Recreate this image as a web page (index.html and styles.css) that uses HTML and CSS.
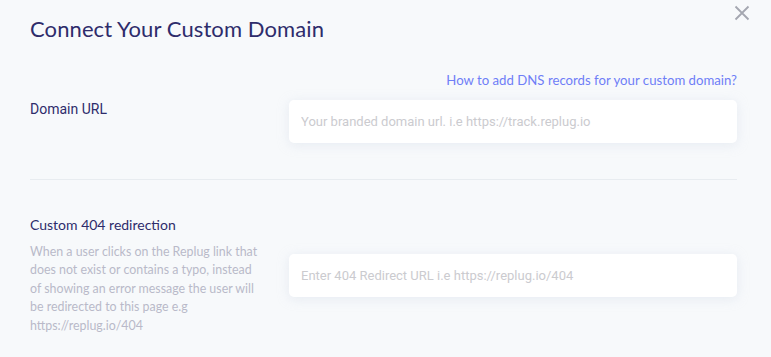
FILE: index.html
```html
<!DOCTYPE html>
<html lang="en">
<head>
    <meta charset="UTF-8">
    <meta name="viewport" content="width=device-width, initial-scale=1.0">
    <title>Connect Your Custom Domain</title>
    <link rel="stylesheet" href="styles.css">
</head>
<body>

    <div class="modal">
        <button class="close-btn" aria-label="Close">
            <svg width="16" height="16" viewBox="0 0 16 16">
                <path d="M1.5 1.5 L14.5 14.5 M14.5 1.5 L1.5 14.5" stroke="#a4a7b0" stroke-width="1.8" fill="none"/>
            </svg>
        </button>

        <h2 class="modal-title">Connect Your Custom Domain</h2>

        <div class="help-row">
            <a href="#" class="help-link">How to add DNS records for your custom domain?</a>
        </div>

        <!-- Domain URL -->
        <div class="form-row top">
            <div class="field-info">
                <label class="field-label field-label-url">Domain URL</label>
            </div>
            <input class="field-input" type="text" placeholder="Your branded domain url. i.e https://track.replug.io">
        </div>

        <div class="divider"></div>

        <!-- 404 redirect -->
        <div class="form-row">
            <div class="field-info">
                <label class="field-label">Custom 404 redirection</label>
                <p class="field-desc">When a user clicks on the Replug link that does not exist or contains a typo, instead of showing an error message the user will be redirected to this page e.g https://replug.io/404</p>
            </div>
            <input class="field-input" type="text" placeholder="Enter 404 Redirect URL i.e https://replug.io/404">
        </div>
    </div>

</body>
</html>
```

FILE: styles.css
```css
body {
    margin: 0;
    background: #f7f9fb;
    font-family: 'Lato', sans-serif;
    color: #2e2c6b;
}

.modal {
    position: relative;
    width: 707px;
    padding: 0 34px 0 30px;
}

.close-btn {
    position: absolute;
    top: 5px;
    right: 21px;
    background: none;
    border: none;
    padding: 0;
    cursor: pointer;
    line-height: 0;
}

.modal-title {
    margin: 0;
    padding-top: 14px;
    font-size: 22px;
    font-weight: normal;
    line-height: 30px;
    letter-spacing: 0.1px;
}

.help-row {
    display: flex;
    justify-content: flex-end;
    margin-top: 27px;
}

.help-link {
    font-size: 13.2px;
    line-height: 18px;
    color: #6f7ef7;
    text-decoration: none;
}

.form-row {
    display: grid;
    grid-template-columns: 259px 1fr;
    align-items: center;
}

.form-row.top {
    align-items: start;
    margin-top: 11px;
}

.field-label {
    display: block;
    font-size: 14px;
    line-height: 18px;
}

.field-label-url {
    font-family: 'Roboto', sans-serif;
    padding-top: 0;
}

.field-desc {
    margin: 9px 0 0;
    width: 228px;
    font-size: 12.4px;
    line-height: 18.4px;
    color: #b9b9c9;
}

.field-input {
    box-sizing: border-box;
    height: 43px;
    width: 100%;
    padding: 0 12px;
    border: none;
    border-radius: 5px;
    background: #fff;
    box-shadow: 0 2px 12px rgba(200, 210, 225, 0.35);
    font-family: 'Roboto', sans-serif;
    font-size: 13px;
    color: #555;
    outline: none;
}

.field-input::placeholder {
    color: #cbcbcf;
}

.divider {
    height: 1px;
    background: #e8ecf0;
    margin: 36px 0 36px;
}
```
